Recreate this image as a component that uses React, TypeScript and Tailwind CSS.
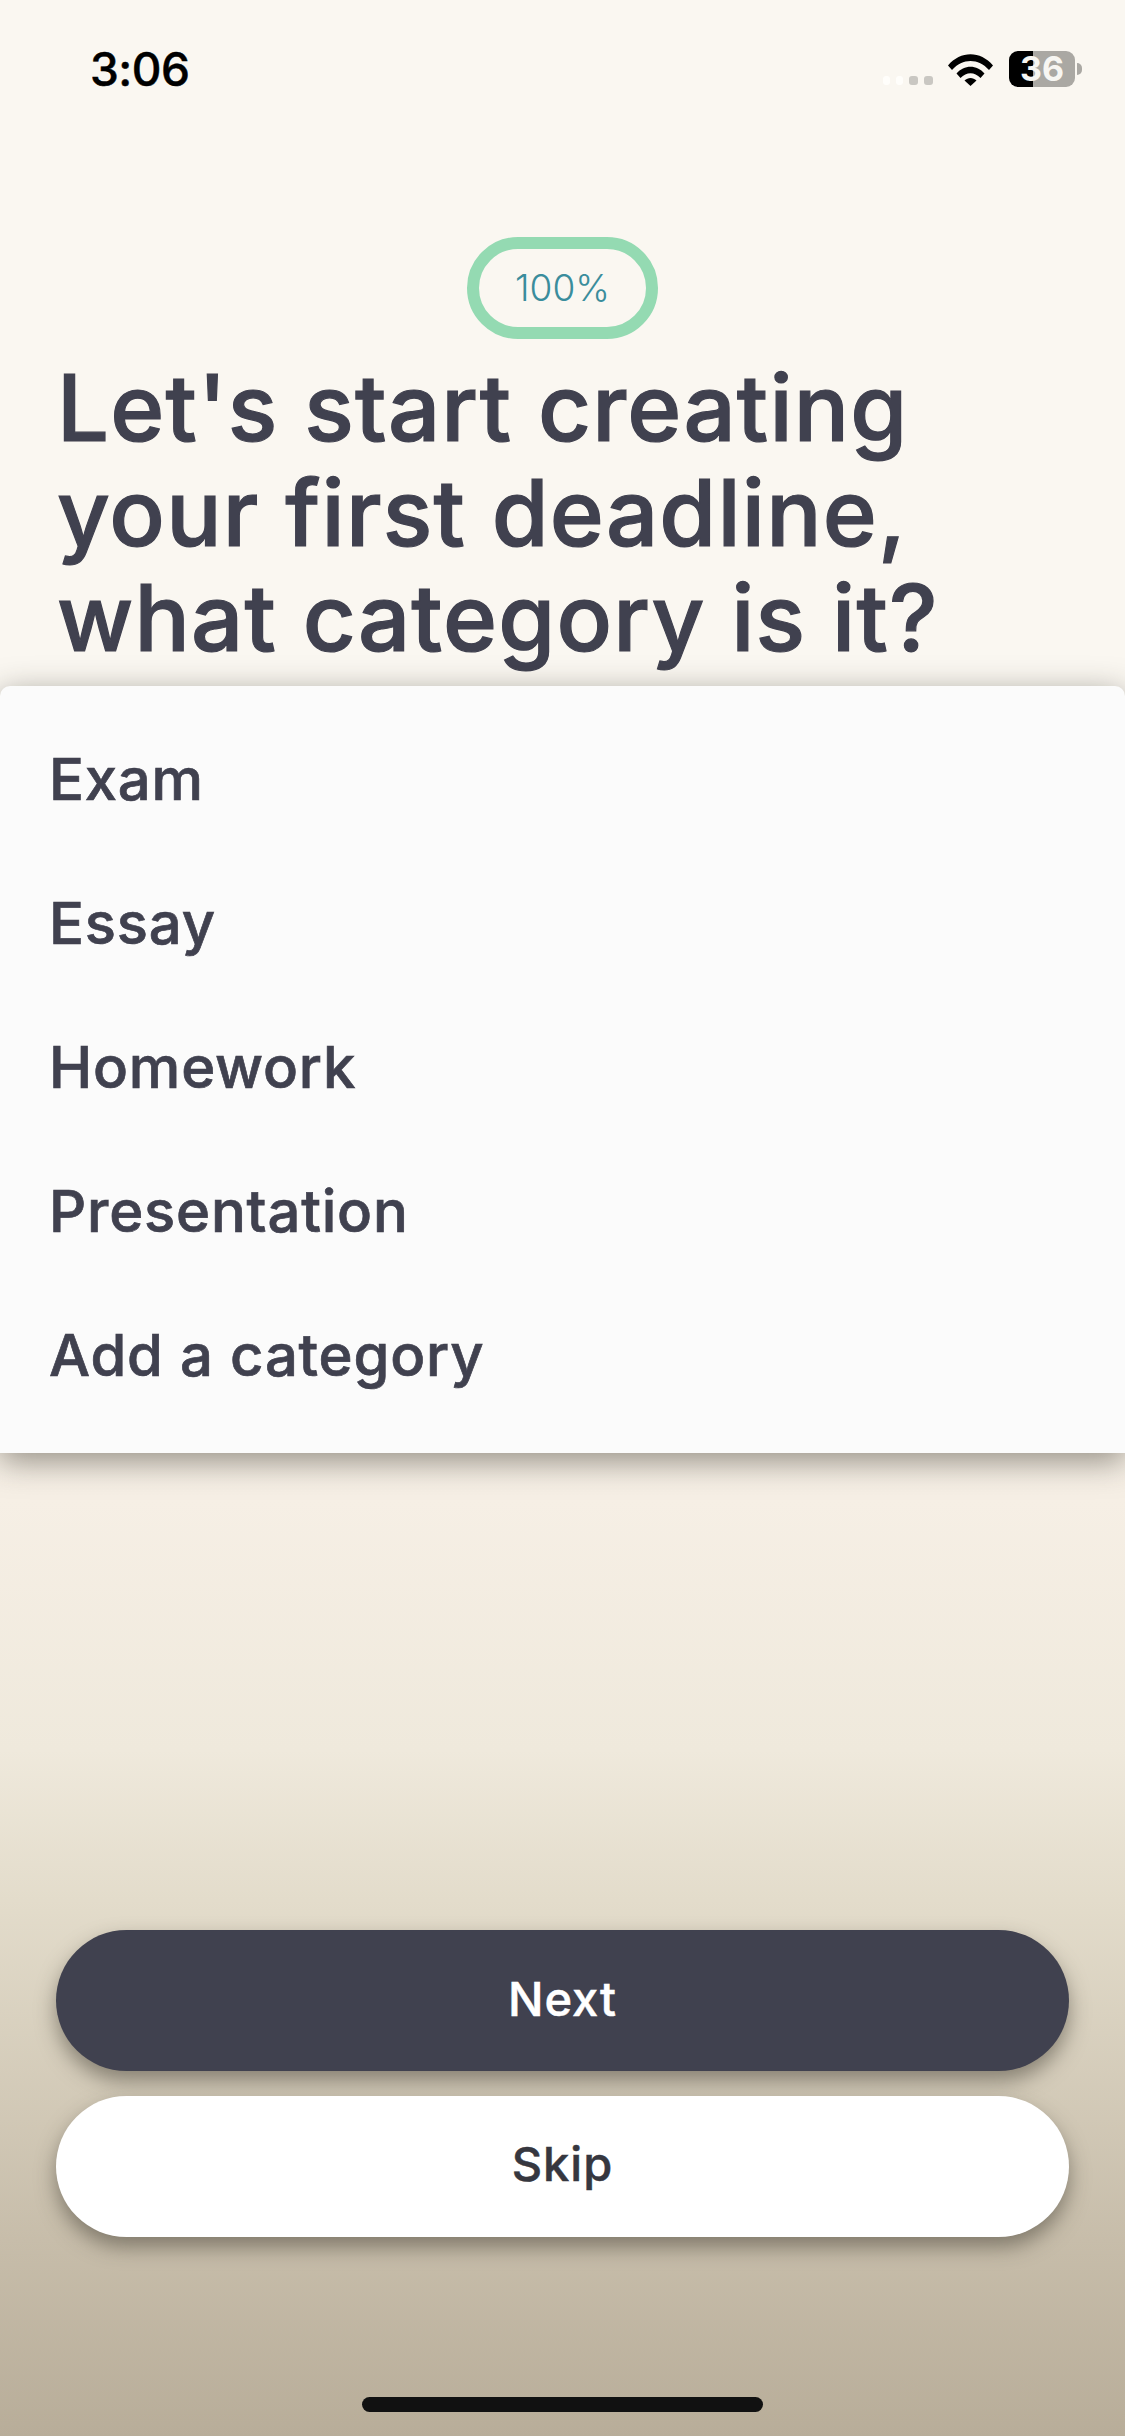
const categories = ["Exam", "Essay", "Homework", "Presentation", "Add a category"]

function StatusIcons() {
  return (
    <div className="flex items-center">
      <div className="flex items-end gap-[6px] h-[36px] pb-[2px]">
        <span className="w-[7px] h-[9px] rounded-[3px] bg-[#fffefb]" />
        <span className="w-[7px] h-[9px] rounded-[3px] bg-[#fffefb]" />
        <span className="w-[9px] h-[9px] rounded-[3px] bg-[#c9c7c2]" />
        <span className="w-[9px] h-[9px] rounded-[3px] bg-[#c9c7c2]" />
      </div>
      <svg className="ml-[15px]" width="45" height="33" viewBox="0 0 45 33" fill="none">
        <path d="M0 12.5C12.5 -2.5 32.5 -2.5 45 12.5L41 17C30.5 5 14.5 5 4 17Z" fill="#000" />
        <path d="M8.5 20.5C16 11.5 29 11.5 36.500 20.5L32.500 25C26.500 18.500 18.500 18.500 12.500 25Z" fill="#000" />
        <path d="M16.500 27.500C20 24 25 24 28.500 27.500L22.500 33Z" fill="#000" />
      </svg>
      <div className="ml-[16px] w-[66px] h-[36px] rounded-[9px] bg-[linear-gradient(90deg,#000_24px,#aaa8a3_24px)] flex items-center justify-center text-[#f7f6f2] text-[34px] font-bold leading-none">
        36
      </div>
      <span className="ml-[2px] w-[5px] h-[12px] rounded-r-full bg-[#aaa8a3]" />
    </div>
  )
}

export default function App() {
  return (
    <div
      className="w-[1125px] h-[2436px] flex flex-col overflow-hidden bg-[linear-gradient(180deg,#faf7f1_0px,#faf7f1_900px,#f6efe5_1500px,#efe9dc_1750px,#e3dccb_1900px,#c7bdaa_2240px,#b8ad99_2436px)] font-['Inter','Liberation_Sans',sans-serif]"
    >
      <div className="flex items-center justify-between pt-[50px] pl-[90px] pr-[43px] h-[88px]">
        <span className="text-[46px] font-medium tracking-[-0.5px] leading-none text-black [-webkit-text-stroke:0.5px_#000]">3:06</span>
        <StatusIcons />
      </div>

      <div className="flex justify-center mt-[149px]">
        <div className="w-[191px] h-[102px] rounded-[51px] border-[12px] border-[#94dab2] flex items-center justify-center text-[37px] font-light text-[#3a8d9c]">
          100%
        </div>
      </div>

      {/* stroke thickens Inter medium to the reference's weight */}
      <h1 className="pl-[57px] mt-[16px] text-[92px] leading-[105px] font-medium tracking-[1.2px] text-[#40414f] [-webkit-text-stroke:1.2px_#40414f] h-[331px]">
        Let's start creating
        <br />
        your first deadline,
        <br />
        what category is it?
      </h1>

      <ul className="h-[767px] rounded-t-[10px] bg-[#fbfbfb] pl-[49px] pt-[21px] shadow-[0_8px_32px_rgba(50,45,35,0.5)]">
        {categories.map((name) => (
          <li key={name} className="h-[144px] flex items-center text-[58px] font-medium tracking-[0.8px] text-[#40414f] [-webkit-text-stroke:0.7px_#40414f]">
            {name}
          </li>
        ))}
      </ul>

      <div className="mt-[477px] px-[56px] flex flex-col gap-[25px]">
        <button
          type="button"
          className="h-[141px] pb-[2px] rounded-[71px] bg-[#40414f] text-white text-[47px] font-medium tracking-[1px] [-webkit-text-stroke:0.5px_#fff] shadow-[0_10px_20px_rgba(60,55,45,0.5)]"
        >
          Next
        </button>
        <button
          type="button"
          className="h-[141px] pb-[4px] rounded-[71px] bg-white text-[#36373f] text-[47px] font-medium tracking-[1px] [-webkit-text-stroke:0.5px_#36373f] shadow-[0_10px_20px_rgba(60,55,45,0.5)]"
        >
          Skip
        </button>
      </div>

      <div className="mt-[160px] mx-auto w-[401px] h-[15px] rounded-full bg-[#111111]" />
    </div>
  )
}
